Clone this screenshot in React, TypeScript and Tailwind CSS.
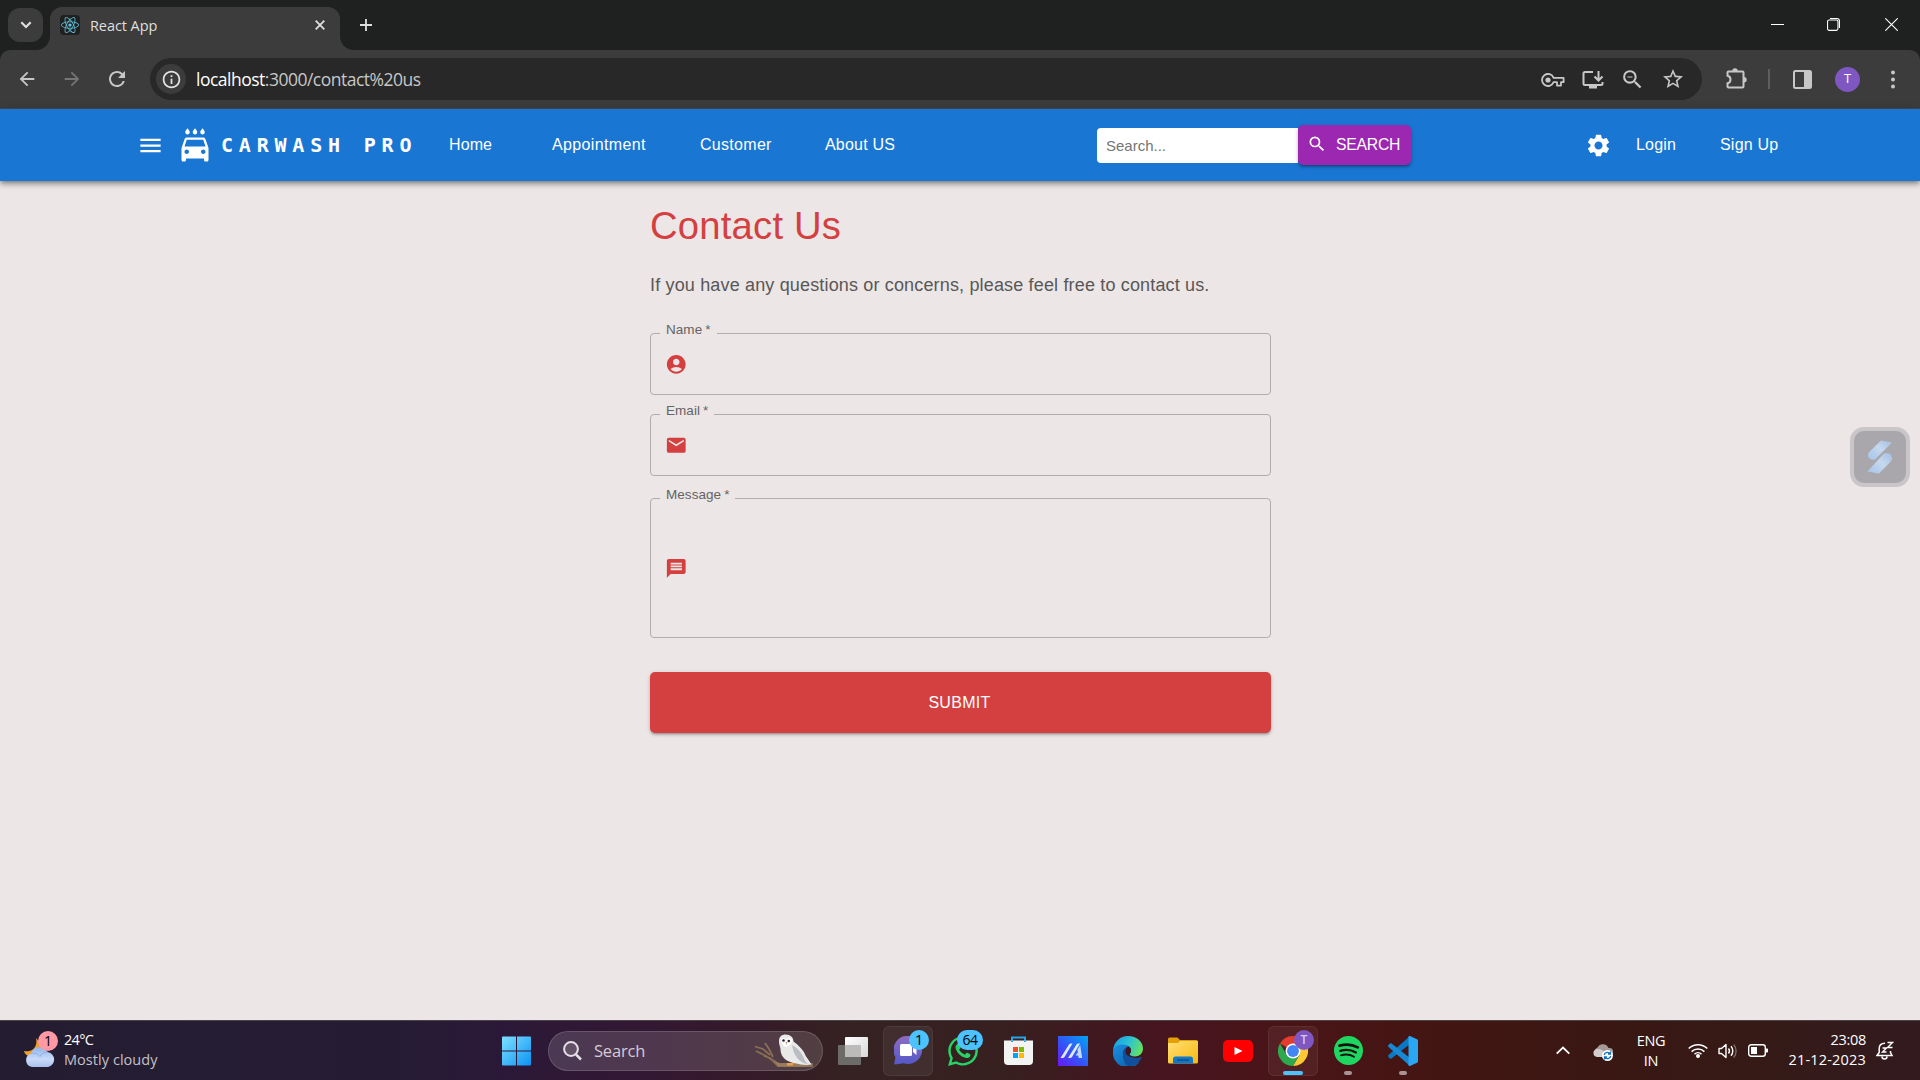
import type { ReactNode } from "react";
import {
  MdMenu, MdLocalCarWash, MdSettings, MdSearch, MdAccountCircle, MdEmail, MdMessage, MdStarBorder,
  MdArrowBack, MdArrowForward, MdRefresh, MdInfoOutline, MdZoomOut,
} from "react-icons/md";
import { FaWhatsapp, FaReact } from "react-icons/fa";

function TabStrip() {
  return (
    <div className="flex h-[50px] items-start bg-[#1f2120] text-[#dfdfdf]">
      <div className="mt-2 ml-2 flex h-[34px] w-[35px] items-center justify-center rounded-xl bg-[#3c3c3c]">
        <svg width="12" height="8" viewBox="0 0 12 8" fill="none" stroke="currentColor" strokeWidth="2.2"><path d="M1.3 1.3 6 6l4.7-4.7" /></svg>
      </div>
      <svg className="mt-[36px] -ml-[7px] shrink-0" width="14" height="14"><path d="M14 0v14H0A14 14 0 0 0 14 0Z" fill="#3c3c3c" /></svg>
      <div className="mt-[7px] flex h-[43px] w-[290px] items-center rounded-t-[12px] bg-[#3c3c3c] pb-[7px]">
        <div className="ml-[10px] flex size-5 items-center justify-center rounded-sm bg-[#202020]">
          <FaReact size={18} color="#5fc6e0" />
        </div>
        <span className="ml-[10px] w-[160px] pt-[2px] text-[14.5px] leading-5 tracking-[-0.08px] whitespace-nowrap">React App</span>
        <svg className="ml-[65px]" width="10" height="10" viewBox="0 0 10 10" stroke="currentColor" strokeWidth="1.8"><path d="M.7.7l8.6 8.6M9.3.7.7 9.3" /></svg>
      </div>
      <svg className="mt-[36px] shrink-0" width="14" height="14"><path d="M0 0v14h14A14 14 0 0 1 0 0Z" fill="#3c3c3c" /></svg>
      <svg className="mt-[19px] ml-[6px]" width="12" height="12" stroke="currentColor" strokeWidth="1.8"><path d="M6 0v12M0 6h12" /></svg>
      <div className="mt-[18px] mr-[22px] ml-auto flex text-white">
        <svg width="13" height="13" stroke="currentColor"><path d="M0 6.5h13" /></svg>
        <svg className="ml-[43px]" width="13" height="13" fill="none" stroke="currentColor" strokeWidth="1.1"><rect x=".55" y="2" width="10.4" height="10.4" rx="1.6" /><path d="M3 .55h7A2.4 2.4 0 0 1 12.45 3v7" /></svg>
        <svg className="ml-[45px]" width="13" height="13" stroke="currentColor" strokeWidth="1.1"><path d="M.3.3l12.4 12.4M12.7.3.3 12.7" /></svg>
      </div>
    </div>
  );
}

function Toolbar() {
  return (
    <div className="bg-[#1f2120]">
      <div className="flex h-[59px] items-center rounded-t-[10px] border-b border-[#4a4a4a] bg-[#3c3c3c] text-[#c7c7c7]">
        <MdArrowBack className="ml-[16px]" size={22} />
        <MdArrowForward className="ml-[23px] text-[#757575]" size={22} />
        <MdRefresh className="ml-[22px]" size={24} />
        <div className="ml-[21px] flex h-[42px] w-[1552px] items-center rounded-full bg-[#282828]">
          <div className="ml-[6px] flex size-[30px] items-center justify-center rounded-full bg-[#3c3c3c] text-[#e3e3e3]">
            <MdInfoOutline size={21} />
          </div>
          <span className="ml-[10px] text-[17.5px] leading-6 tracking-[-0.5px] whitespace-nowrap text-[#c7c7c7]"><span className="text-white">localhost</span>:3000/contact%20us</span>
          <svg className="mt-[2px] ml-auto" width="24" height="14" viewBox="0 0 24 14" fill="none" stroke="currentColor" strokeWidth="1.8">
            <path d="M12.6 4.8A6 6 0 1 0 12.6 9.2h3.4v3.400h4V9.2h2.600V4.8Z" strokeLinejoin="round" /><circle cx="7" cy="7" r="2.6" fill="currentColor" stroke="none" />
          </svg>
          <svg className="mt-[1px] ml-[17px]" width="22" height="20" viewBox="0 0 22 20" fill="none" stroke="currentColor" strokeWidth="2">
            <path d="M11 2H3a1.5 1.5 0 0 0-1.5 1.5v10A1.5 1.5 0 0 0 3 15h16a1.5 1.5 0 0 0 1.5-1.5V12M16.5 1v9M12.5 6.5l4 4 4-4" /><path d="M7 16h8v2.5H7z" fill="currentColor" stroke="none" />
          </svg>
          <MdZoomOut className="mt-[1px] ml-[16px]" size={25} />
          <MdStarBorder className="mr-[17px] ml-[16px]" size={24} />
        </div>
        <svg className="ml-[23px]" width="22" height="22" viewBox="0 0 22 22" fill="none" stroke="currentColor" strokeWidth="2">
          <path d="M3.5 3.5h14a1 1 0 0 1 1 1v14a1 1 0 0 1-1 1h-14a1 1 0 0 1-1-1v-3.2c1.8-.3 3-1.800 3-3.800s-1.200-3.500-3-3.800V4.500a1 1 0 0 1 1-1Z" /><path d="M7.300 3a2.700 2.700 0 0 1 5.400 0ZM19 9a2.700 2.700 0 0 1 0 5.400Z" fill="currentColor" stroke="none" />
        </svg>
        <div className="ml-[21px] h-5 w-[2px] bg-[#5e5e5e]" />
        <svg className="ml-[23px]" width="19" height="19" fill="none" stroke="currentColor" strokeWidth="2"><rect x="1" y="1" width="17" height="17" rx="1.500" /><path d="M11 1h7v17h-7z" fill="currentColor" stroke="none" /></svg>
        <div className="ml-[23px] flex size-[25px] items-center justify-center rounded-full bg-[#7e57c2] text-[13px] text-white">T</div>
        <svg className="ml-[31px]" width="4" height="19" fill="currentColor"><circle cx="2" cy="2.500" r="2" /><circle cx="2" cy="9.500" r="2" /><circle cx="2" cy="16.500" r="2" /></svg>
      </div>
    </div>
  );
}

function AppBar() {
  return (
    <header className="z-10 flex h-[72px] items-center bg-[#1976d2] font-['Liberation_Sans',Arial,sans-serif] text-[16px] leading-6 tracking-[0.2px] whitespace-nowrap text-white shadow-[0_2px_4px_-1px_rgba(0,0,0,0.3),0_4px_5px_0_rgba(0,0,0,0.18),0_1px_10px_0_rgba(0,0,0,0.14)]">
      <MdMenu className="ml-[137px] shrink-0" size={27} />
      <MdLocalCarWash className="ml-[13px] shrink-0" size={36} />
      <span className="ml-[8px] w-[219px] font-['DejaVu_Sans_Mono',monospace] text-[20px] font-bold tracking-[5.800px]">CARWASH PRO</span>
      <nav className="flex">
        <span className="ml-[9px] w-[103px] tracking-[0.1px]">Home</span>
        <span className="w-[148px] tracking-[0.350px]">Appointment</span>
        <span className="w-[125px] tracking-[0.300px]">Customer</span>
        <span className="w-[272px]">About US</span>
      </nav>
      <div className="flex h-[35px] w-[201px] items-center rounded-l-[4px] bg-white pt-[2px] pl-[9px] text-[15px] tracking-normal text-[#757575]">Search...</div>
      <div className="flex h-[40px] w-[113px] items-center rounded-[5px] bg-[#9c27b0] pb-[2px] pl-[9px] shadow-[0_3px_2px_-2px_rgba(0,0,0,0.2),0_2px_3px_0_rgba(0,0,0,0.2),0_1px_5px_0_rgba(0,0,0,0.12)]">
        <MdSearch size={20} /><span className="ml-[9px] pt-[1px] text-[15.750px] tracking-[-0.250px]">SEARCH</span>
      </div>
      <MdSettings className="ml-[174px] shrink-0" size={27} />
      <span className="ml-[24px] w-[84px]">Login</span>
      <span>Sign Up</span>
    </header>
  );
}

function Field({ label, className, children }: { label: string; className: string; children: ReactNode }) {
  return (
    <fieldset className={`w-[621px] rounded-[4px] border border-[#b1adad] pl-[9px] text-[#d43f3f] ${className}`}>
      <legend className="h-[21px] pr-[6px] pl-[6px] text-[13.5px] leading-[13px] tracking-[0.05px] text-[#666363]">
        {label}<span className="ml-[3px]">*</span>
      </legend>
      {children}
    </fieldset>
  );
}

function Contact() {
  return (
    <main className="flex h-[839px] flex-col bg-[#ece6e6] pl-[650px] font-['Liberation_Sans',Arial,sans-serif]">
      <h1 className="mt-[21px] h-[48px] text-[38.25px] leading-[48px] tracking-[0.2px] text-[#d43f3f]">Contact Us</h1>
      <p className="mt-[21px] h-[28px] text-[18px] leading-7 tracking-[0.160px] text-[#595757]">If you have any questions or concerns, please feel free to contact us.</p>
      <Field label="Name" className="mt-[24px] h-[72px]"><MdAccountCircle className="mt-[9px] ml-[5px]" size={22.5} /></Field>
      <Field label="Email" className="mt-[9px] h-[72px]"><MdEmail className="mt-[9px] ml-[5px]" size={22.5} /></Field>
      <Field label="Message" className="mt-[12px] h-[150px]"><MdMessage className="mt-[48px] ml-[5px]" size={22.5} /></Field>
      <button className="mt-[34px] h-[61px] w-[621px] rounded-[5px] bg-[#d43f3f] pr-[2px] text-[16px] tracking-[0.3px] text-white shadow-[0_3px_2px_-2px_rgba(0,0,0,0.2),0_2px_3px_0_rgba(0,0,0,0.14),0_1px_5px_0_rgba(0,0,0,0.12)]">SUBMIT</button>
    </main>
  );
}

function FloatingWidget() {
  return (
    <div className="absolute top-[427px] left-[1850px] z-20 flex size-[60px] items-center justify-center rounded-[14px] border-4 border-[#cac5c9] bg-[#a9a7ab]">
      <svg width="26" height="34" viewBox="0 0 26 34">
        <defs><linearGradient id="ribbon" x1="1" y1="0" x2="0" y2="1"><stop offset="0" stopColor="#a3bfe2" /><stop offset=".45" stopColor="#c6d8ee" /><stop offset="1" stopColor="#a4c4ea" /></linearGradient></defs>
        <path d="M14 0.500 25 2.500 9 18.500c-3 3-8 .5-8-3.500 0-1.500.6-2.300 1.500-3.200Z" fill="url(#ribbon)" />
        <path d="M12 33.500.500 31.500 15.500 15c3-3.500 9-2 9.500 3 .2 1.700-.5 2.700-1.500 3.700Z" fill="url(#ribbon)" />
      </svg>
    </div>
  );
}

function Cell({ children, active = false }: { children: ReactNode; active?: boolean }) {
  return (
    <div className="flex h-[59px] w-[55px] shrink-0 items-center justify-center">
      <div className={active ? "relative flex size-[50px] items-center justify-center rounded-md border border-white/6 bg-white/6" : "relative flex size-[50px] items-center justify-center"}>{children}</div>
    </div>
  );
}

function Weather() {
  return (
    <div className="relative mb-[2px] ml-[24px] h-[36px] w-[31px]">
      <svg width="31" height="36" viewBox="0 0 31 36">
        <defs><linearGradient id="cloud" x1="0" y1="0" x2="0" y2="1"><stop offset="0" stopColor="#8fb4ee" /><stop offset=".6" stopColor="#c9dbf8" /><stop offset="1" stopColor="#a9c2ec" /></linearGradient></defs>
        <path d="M12 6c2 8-3 15-12 13 1 4 5 6 9 6 7 0 11-6 9-12Z" fill="#f0a024" />
        <path d="M8 35a7 7 0 0 1-1-13.600A9 9 0 0 1 23.500 20 7.600 7.600 0 0 1 24 35Z" fill="url(#cloud)" />
        <path d="M7 21.500c4-1 7 .5 9 3 1-2.500 4-4.500 7.500-4.500" fill="none" stroke="#8fb0e6" strokeWidth="1" />
      </svg>
      <div className="absolute -top-[1px] left-[14px] flex size-5 items-center justify-center rounded-full bg-[#ff99a4] text-[14px] text-black">1</div>
    </div>
  );
}

function Owl() {
  return (
    <svg className="ml-auto" width="60" height="34" viewBox="0 0 60 34">
      <path d="M2 17l10 5 9 6c3 3 6 2 10 2h27v2H24l-8-8-6-2M1 12.500 9 15l7 6M11 9l4 6 4 8M15 15l-2-3" fill="none" stroke="#8a6e55" strokeWidth="1.800" />
      <path d="M18 23c4 6 8 7 14 6l26 0-5 3.500H24Z" fill="#9b7d5c" />
      <path d="M25 7C25 2.500 28 .5 31.500.500c5 0 8 3 8 7 4 3 10 8 12 14l6 9c-7 1-11 0-15-1-9-1-16-6-16-14 0-3-1.500-4-1.500-8.500Z" fill="#e9e9ea" />
      <path d="M38 11c6 3 11 9 13 16l3 3c-8-1-14-7-16-19Z" fill="#babdc4" />
      <path d="M27 5c2-2 4-1 5 1 1-2 4-3 6 0 0 4-3 6-6 7-3-1-5-4-5-8Z" fill="#fff" />
      <circle cx="29.500" cy="6.500" r="1.300" fill="#2c2030" /><circle cx="34.800" cy="7" r="1.300" fill="#2c2030" /><path d="M31.500 8l1 3 .8-3Z" fill="#b59c85" />
      <path d="M33 29h6v2.500h-6z" fill="#eda04a" />
    </svg>
  );
}

function ChromeLogo() {
  return (
    <svg width="30" height="30" viewBox="0 0 48 48">
      <path d="M24 24 3.200 12a24 24 0 0 1 41.600 0H24Z" fill="#e33b2e" />
      <path d="M24 12h20.800A24 24 0 0 1 24 48l10.400-18Z" fill="#fcc934" />
      <path d="M3.200 12 13.600 30 24 36l-.1 12H24A24 24 0 0 1 3.200 12Z" fill="#2da94f" />
      <path d="M24 48 34.400 30 24 34 14 30Z" fill="#2da94f" />
      <circle cx="24" cy="24" r="12" fill="#fff" /><circle cx="24" cy="24" r="9.500" fill="#4285f4" />
    </svg>
  );
}

function EdgeLogo() {
  return (
    <svg width="30" height="30" viewBox="0 0 30 30">
      <defs>
        <linearGradient id="edgeTop" x1="0" y1=".3" x2="1" y2=".6"><stop offset="0" stopColor="#1a9ee6" /><stop offset=".5" stopColor="#2cc3d2" /><stop offset="1" stopColor="#67e25c" /></linearGradient>
        <linearGradient id="edgeLow" x1="0" y1="0" x2="1" y2="1"><stop offset="0" stopColor="#1b8fe0" /><stop offset="1" stopColor="#0c59a4" /></linearGradient>
      </defs>
      <path d="M0 15C.500 6 7 0 15 0c9 0 15 6 15 12.500 0 5-4 8-8 8-3 0-5.500-1-5.500-2.200 0-.8 1.500-1.300 1.500-3.600C18 11 14 9 9.500 9 5 9 1 12 0 15Z" fill="url(#edgeTop)" />
      <path d="M0 15c1-4 5-6.500 9.500-6.500 2.500 0 5 .7 6.500 2-4 .5-6 4-6 7.500 0 5 4 9.500 10 9.500 3 0 5-1 7-2A15 15 0 0 1 0 15Z" fill="url(#edgeLow)" />
      <path d="M10 18c0-3.500 2-7 6-7.500 1.300 1 2 2.500 2 4.200 0 2.300-1.500 2.800-1.500 3.600 0 2 3 3.700 6.500 3.700 2 0 3.500-.5 5-1 .8-.3 1 .2.700.700A15 15 0 0 1 15 30c-3.500-1.500-5-7-5-12Z" fill="#104f9c" />
      <path d="M15.500 10.600c1.600 1 2.500 2.400 2.500 4.100 0 2.300-1.500 2.800-1.500 3.600 0 1 .8 1.900 2 2.600-4-.3-6-2.900-6-5.700 0-2 1.200-3.800 3-4.600Z" fill="#3f1620" />
    </svg>
  );
}

function TaskbarApps() {
  return (
    <div className="flex">
      <Cell>
        <svg width="30" height="28" viewBox="0 0 30 28"><defs><linearGradient id="pane" x1="0" y1="0" x2="1" y2="1"><stop offset="0" stopColor="#fff" /><stop offset="1" stopColor="#d8d8d8" /></linearGradient></defs>
          <rect x="7" width="23" height="20" rx="1" fill="url(#pane)" /><rect y="8" width="23" height="20" rx="1" fill="#6d6a6a" /><path d="M7 8h16v12H7z" fill="#bdbaba" /></svg>
      </Cell>
      <Cell active>
        <svg width="29" height="29" viewBox="0 0 29 29"><defs><linearGradient id="chat" x1="0" y1="0" x2="0" y2="1"><stop offset="0" stopColor="#8d6cc0" /><stop offset="1" stopColor="#5558c8" /></linearGradient></defs>
          <path d="M14.500 0a14 14 0 1 1-5 27.200L1 28.500c-.8 0-1-.5-.7-1.200l1.200-6A14 14 0 0 1 14.500 0Z" fill="url(#chat)" /><rect x="6" y="8" width="12" height="12" rx="1.500" fill="#fff" /><path d="M19 12.500 22.500 10v9L19 16Z" fill="#fff" /></svg>
        <div className="absolute top-[3px] left-[25px] flex size-5 items-center justify-center rounded-full bg-[#4cc2ff] pb-[1px] text-[15px] text-black">1</div>
      </Cell>
      <Cell>
        <FaWhatsapp size={34} color="#25d366" />
        <div className="absolute top-[4px] left-[19px] flex h-5 w-[26px] items-center justify-center rounded-full bg-[#4cc2ff] pb-[1px] text-[14px] tracking-[-0.500px] text-black">64</div>
      </Cell>
      <Cell>
        <svg width="29" height="29" viewBox="0 0 29 29"><path d="M8 6V1.500h13V6" fill="none" stroke="#22a6e8" strokeWidth="2" /><path d="M0 4.500h29V25a4 4 0 0 1-4 4H4a4 4 0 0 1-4-4Z" fill="#f3f3f3" /><path d="M7 4.500h2V6H7zM20 4.500h2V6h-2z" fill="#22a6e8" /><path d="M9 11h5v5H9z" fill="#f25022" /><path d="M15 11h5v5h-5z" fill="#7fba00" /><path d="M9 17h5v5H9z" fill="#00a4ef" /><path d="M15 17h5v5h-5z" fill="#ffb900" /></svg>
      </Cell>
      <Cell>
        <svg width="30" height="30" viewBox="0 0 30 30"><defs><linearGradient id="asus" x1="0" y1="1" x2="1" y2="0"><stop offset="0" stopColor="#6a18f5" /><stop offset=".45" stopColor="#3453f8" /><stop offset="1" stopColor="#00a5f5" /></linearGradient></defs>
          <path d="M0 0h30v30H0z" fill="url(#asus)" /><path d="M2.500 22 11 8.500q.7-1 2-1h1.500L6.500 21q-.7 1-2 1ZM10 22l8.500-13.500q.7-1 2-1H22L14 21q-.7 1-2 1Z" fill="#dfe8fd" /><path d="M22.200 9 24.200 22h-3.500l-.5-2.500h-2.500l1.500-2.500h.7l-.4-3.500Z" fill="#c3d8fb" /></svg>
      </Cell>
      <Cell><EdgeLogo /></Cell>
      <Cell>
        <svg width="30" height="27" viewBox="0 0 30 27"><defs><linearGradient id="folder" x1="0" y1="0" x2="1" y2="1"><stop offset="0" stopColor="#ffdf76" /><stop offset="1" stopColor="#f8b90f" /></linearGradient></defs>
          <path d="M0 2a1.500 1.500 0 0 1 1.500-1.500h8L12 3h16a2 2 0 0 1 2 2v9H0Z" fill="#e3a008" /><path d="M0 6h10l2-2h18v21a1.500 1.500 0 0 1-1.500 1.500h-27A1.500 1.500 0 0 1 0 25Z" fill="url(#folder)" /><path d="M5 26.500V22a2.500 2.500 0 0 1 2.500-2.500h15A2.500 2.500 0 0 1 25 22v4.500Z" fill="#1277c9" /><path d="M9 23h12" stroke="#0c4a86" strokeWidth="1.300" /></svg>
      </Cell>
      <Cell><svg width="30" height="22"><rect width="30" height="22" rx="5" fill="#f00" /><path d="m11.500 7 8 4-8 4Z" fill="#fff" /></svg></Cell>
      <Cell active>
        <ChromeLogo />
        <div className="absolute top-[3px] left-[25px] flex size-5 items-center justify-center rounded-full bg-[#7e57c2] text-[12px] font-semibold text-[#d9c8f0]">T</div>
        <div className="absolute bottom-0 left-[14px] h-[4px] w-5 rounded-full bg-[#4cc2ff]" />
      </Cell>
      <Cell>
        <svg width="29" height="29" viewBox="0 0 29 29" fill="none" stroke="#16120f" strokeLinecap="round"><circle cx="14.500" cy="14.500" r="14.500" fill="#1ed760" stroke="none" /><path d="M5.500 9.700c6.500-1.900 13-1.300 18.300 1.700" strokeWidth="2.800" /><path d="M6.300 14.800c5.500-1.600 11-1 15.600 1.600" strokeWidth="2.300" /><path d="M7 19.300c4.600-1.300 9.200-.8 13 1.400" strokeWidth="1.900" /></svg>
        <div className="absolute bottom-[1px] left-[21px] h-[4px] w-2 rounded-full bg-[#a89494]" />
      </Cell>
      <Cell>
        <svg width="30" height="30" viewBox="0 0 30 30"><path d="M22 0v8L3.500 22.500c-.5.400-1 .4-1.500 0L.500 21c-.6-.6-.6-1.300 0-1.900Z" fill="#0879c4" /><path d="M22 30v-8L3.500 7.500c-.5-.4-1-.4-1.500 0L.500 9c-.6.600-.6 1.300 0 1.900Z" fill="#1789d4" /><path d="M22 0 29 3.200c.7.400 1 .8 1 1.600v20.400c0 .8-.3 1.200-1 1.600L22 30c-1 .2-1.500-.2-1.500-1V1c0-.8.5-1.200 1.500-1Z" fill="#2aa7f2" /></svg>
        <div className="absolute bottom-[1px] left-[21px] h-[4px] w-2 rounded-full bg-[#a89494]" />
      </Cell>
    </div>
  );
}

function Tray() {
  return (
    <div className="mr-[26px] ml-auto flex items-center text-[14.500px] leading-5 tracking-[-0.300px] whitespace-nowrap text-white">
      <svg width="14" height="9" fill="none" stroke="currentColor" strokeWidth="1.800"><path d="m.7 7.700 6.300-6.200 6.300 6.200" /></svg>
      <svg className="mt-[4px] ml-[23px]" width="20" height="17" viewBox="0 0 20 17"><path d="M5 12a4.500 4.500 0 0 1-.5-8.500A6 6 0 0 1 15.500 4 4 4 0 0 1 17 12Z" fill="#a59a99" /><path d="M4 13A4 4 0 0 1 3 5.300c3-1 6 0 7.500 2.200L12 13Z" fill="#d5cecd" /><circle cx="14.500" cy="11.500" r="5.500" fill="#fff" /><path d="M11.200 11a3.400 3.400 0 0 1 6-1.300M17.800 12a3.400 3.400 0 0 1-6 1.300M17.500 7.500V10H15M11.500 15.500V13H14" fill="none" stroke="#1170c4" strokeWidth="1.300" /></svg>
      <div className="ml-[23px] w-[30px] text-center"><div>ENG</div><div>IN</div></div>
      <svg className="ml-[22px]" width="20" height="15" viewBox="0 0 20 15" fill="none" stroke="currentColor" strokeWidth="1.500"><path d="M.7 5.500a13.200 13.200 0 0 1 18.600 0M3.600 8.600a9 9 0 0 1 12.800 0M6.500 11.200a5 5 0 0 1 7 0" /><circle cx="10" cy="13" r="2" fill="currentColor" stroke="none" /></svg>
      <svg className="ml-[10px]" width="20" height="16" viewBox="0 0 20 16" fill="none" stroke="currentColor" strokeWidth="1.400"><path d="M1 5.500h2.500L8 1.500v13l-4.500-4H1Z" strokeLinejoin="round" /><path d="M10.500 5.500a4 4 0 0 1 0 5M13 3.300a7 7 0 0 1 0 9.400" /><path d="M15.700 1.500a10 10 0 0 1 0 13" opacity=".35" /></svg>
      <svg className="ml-[10px]" width="20" height="13" viewBox="0 0 20 13"><rect x=".7" y=".7" width="16.600" height="11.600" rx="2.500" fill="none" stroke="currentColor" strokeWidth="1.400" /><path d="M3 3h6v7H3zM18 4.500h1.200c.5 0 .8.400.8.800v2.400c0 .4-.3.800-.8.800H18Z" fill="currentColor" /></svg>
      <div className="ml-[18px] w-[80px] pb-[2px] text-right"><div>23:08</div><div className="tracking-[0.180px]">21-12-2023</div></div>
      <svg className="mb-[1px] ml-[10px]" width="18" height="19" viewBox="0 0 18 19" fill="none" stroke="currentColor" strokeWidth="1.500"><path d="M9 2.200C5.300 2.200 3.200 4.500 3.200 7.500v4L1 14.500h15l-1.500-3V10M6 15.500a2.500 2.500 0 0 0 5 0" /><path d="M11.500 1.500h5l-5 5h5M6.500 7h4l-4 4h4" strokeWidth="1.400" /></svg>
    </div>
  );
}

function Taskbar() {
  return (
    <footer className="flex h-[60px] items-center border-t border-[#4b4448] bg-[linear-gradient(90deg,#241d31_0px,#251c34_400px,#2b1838_500px,#331833_650px,#351a2a_740px,#352222_850px,#37201f_1000px,#451520_1150px,#4a1416_1300px,#401612_1480px,#391713_1620px,#351a16_1760px,#321a20_1920px)]">
      <Weather />
      <div className="ml-[9px] w-[438px] pb-[2px] text-[14.500px] leading-5 tracking-[0.050px] text-white"><div className="tracking-[-0.700px]">24°C</div><div className="text-[#c5c1c8]">Mostly cloudy</div></div>
      <svg width="30" height="30" viewBox="0 0 30 30"><defs><linearGradient id="win" x1="0" y1="0" x2="1" y2="1"><stop offset="0" stopColor="#7fe0ff" /><stop offset="1" stopColor="#0a93f5" /></linearGradient></defs><path d="M0 1.500A1 1 0 0 1 1 .500h13v14H0ZM15 .500h13a1 1 0 0 1 1 1v13H15ZM0 15.500h14v14H1a1 1 0 0 1-1-1ZM15 15.500h14v13a1 1 0 0 1-1 1H15Z" fill="url(#win)" /></svg>
      <div className="ml-[16px] flex h-[40px] w-[275px] shrink-0 items-center rounded-full border border-white/15 bg-white/14 pr-[8px] pl-[14px]">
        <svg width="19" height="20" viewBox="0 0 19 20" fill="none" stroke="#e5dfe8" strokeWidth="2"><circle cx="8" cy="8" r="6.900" fill="#ffffff20" /><path d="m13 13.500 5 5" strokeWidth="2.500" /></svg>
        <span className="ml-[12px] pt-[1px] text-[16.500px] tracking-[-0.200px] text-[#d4cbd6]">Search</span>
        <Owl />
      </div>
      <div className="ml-[2.500px]"><TaskbarApps /></div>
      <Tray />
    </footer>
  );
}

export default function App() {
  return (
    <div className="relative flex h-[1080px] w-[1920px] flex-col overflow-hidden font-['Open_Sans','Noto_Sans',sans-serif]">
      <TabStrip />
      <Toolbar />
      <AppBar />
      <Contact />
      <FloatingWidget />
      <Taskbar />
    </div>
  );
}
